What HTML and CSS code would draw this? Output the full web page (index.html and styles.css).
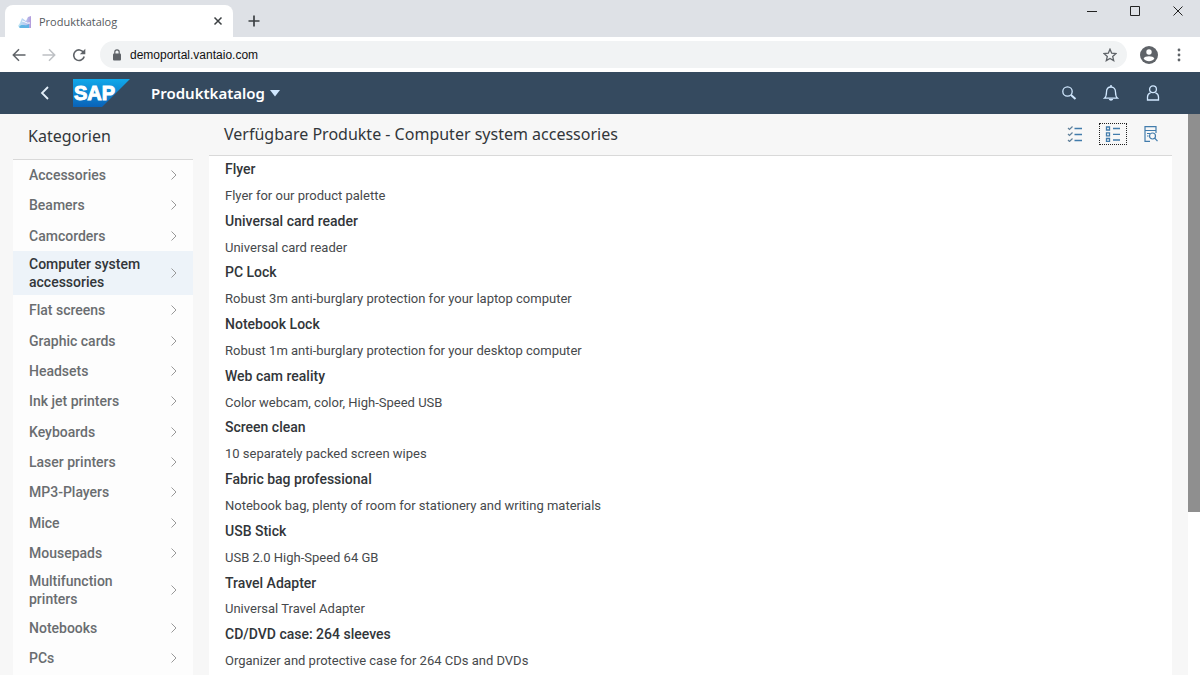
FILE: index.html
```html
<!DOCTYPE html>
<html lang="de">
<head>
<meta charset="utf-8">
<title>Produktkatalog</title>
<link rel="stylesheet" href="styles.css">
</head>
<body>
<svg class="sprite" aria-hidden="true">
  <symbol id="chevron" viewBox="0 0 8 12"><path d="M1.500 1.500 6 6l-4.500 4.500" fill="none" stroke="currentColor"/></symbol>
</svg>
<header class="browser">
  <div class="tabstrip">
    <div class="tab">
      <svg class="favicon" viewBox="0 0 14 14"><defs><linearGradient id="fav" x1="0" x2="1"><stop offset="0" stop-color="#a5dff0"/><stop offset=".6" stop-color="#9fb6ec"/><stop offset="1" stop-color="#9a78cf"/></linearGradient></defs><path d="M13 2v12H2L0 12l2-3 2-5 4 3 2-4z" fill="url(#fav)" opacity=".75"/><path d="M1 13c3-4 6 0 10-3v4H2z" fill="#5fb3e4"/><path d="M4 7c3 0 4 3 8 2" fill="none" stroke="#fff"/></svg>
      <span class="tab-title">Produktkatalog</span>
      <button class="plain" aria-label="Tab schließen"><svg width="10" height="10" viewBox="0 0 10 10"><path d="m1.500 1.500 7 7m0-7-7 7" stroke="#3c4043" stroke-width="1.500"/></svg></button>
    </div>
    <button class="plain new-tab" aria-label="Neuer Tab"><svg width="12" height="12" viewBox="0 0 12 12"><path d="M6 .5v11M.5 6h11" stroke="#3c4043" stroke-width="1.700"/></svg></button>
    <div class="window-controls">
      <button class="plain" aria-label="Minimieren"><svg width="12" height="12" viewBox="0 0 12 12"><path d="M1 6.500h10" stroke="#222"/></svg></button>
      <button class="plain" aria-label="Maximieren"><svg width="12" height="12" viewBox="0 0 12 12"><path d="M1.500 1.500h9v9h-9z" fill="none" stroke="#222"/></svg></button>
      <button class="plain" aria-label="Schließen"><svg width="12" height="12" viewBox="0 0 12 12"><path d="m1.500 1.500 9 9m0-9-9 9" stroke="#222"/></svg></button>
    </div>
  </div>
  <div class="toolbar">
    <button class="plain" aria-label="Zurück"><svg width="14" height="14" viewBox="0 0 14 14" fill="none" stroke="#5f6368" stroke-width="1.500"><path d="M13.500 7h-12M7 1.300 1.300 7 7 12.700"/></svg></button>
    <button class="plain" aria-label="Vorwärts"><svg width="14" height="14" viewBox="0 0 14 14" fill="none" stroke="#bdc0c4" stroke-width="1.500"><path d="M.5 7h12M7 1.300 12.700 7 7 12.700"/></svg></button>
    <button class="plain" aria-label="Neu laden"><svg width="14" height="14" viewBox="0 0 14 14"><path d="M11.600 4.500A5.300 5.300 0 1 0 12.200 8.500" fill="none" stroke="#5f6368" stroke-width="1.600"/><path d="M13.300.8v5.400H7.900z" fill="#5f6368"/></svg></button>
    <div class="address">
      <svg width="10" height="12" viewBox="0 0 10 12"><rect x="1" y="4.500" width="8" height="7" rx="1" fill="#5f6368"/><path d="M2.800 5V3a2.200 2.200 0 0 1 4.400 0v2" fill="none" stroke="#5f6368" stroke-width="1.200"/></svg>
      <input class="url" aria-label="Adresse" value="demoportal.vantaio.com">
      <button class="plain" aria-label="Lesezeichen"><svg width="14" height="14" viewBox="0 0 14 14"><path d="m7 1.200 1.700 4 4.300.4-3.300 2.800 1 4.200L7 10.400l-3.700 2.200 1-4.200L1 5.600l4.300-.4z" fill="none" stroke="#5f6368" stroke-width="1.300"/></svg></button>
    </div>
    <button class="plain" aria-label="Profil"><svg width="18" height="18" viewBox="0 0 18 18"><circle cx="9" cy="9" r="9" fill="#5f6368"/><circle cx="9" cy="6" r="2.700" fill="#fff"/><path d="M3.600 12.500c1.200-3 9.600-3 10.800 0-2.400 3.700-8.400 3.700-10.800 0z" fill="#fff"/></svg></button>
    <button class="plain" aria-label="Menü"><svg width="4" height="14" viewBox="0 0 4 14" fill="#5f6368"><circle cx="2" cy="2" r="1.400"/><circle cx="2" cy="7" r="1.400"/><circle cx="2" cy="12" r="1.400"/></svg></button>
  </div>
</header>
<div class="shell">
  <button class="plain" aria-label="Zurück"><svg width="10" height="14" viewBox="0 0 10 14"><path d="M8 1 2 7l6 6" fill="none" stroke="#e4f0fa" stroke-width="1.800"/></svg></button>
  <svg class="logo" viewBox="0 0 57 28" role="img" aria-label="SAP"><defs><linearGradient id="sap" x2="0" y2="1"><stop offset="0" stop-color="#10a8ea"/><stop offset="1" stop-color="#0a62b8"/></linearGradient></defs><path d="M0 0h57L29 28H0z" fill="url(#sap)"/><text class="logo-text" x="1" y="21">SAP</text></svg>
  <button class="plain app-title">Produktkatalog <svg width="10" height="7" viewBox="0 0 10 7"><path d="M0 0h10L5 6.500z" fill="#d1e8ff"/></svg></button>
  <div class="shell-actions">
    <button class="plain" aria-label="Suche"><svg width="16" height="16" viewBox="0 0 16 16" fill="none" stroke="#d1e8ff"><circle cx="6.500" cy="6.500" r="4.700" stroke-width="1.300"/><path d="m10 10 4.500 4" stroke-width="2"/></svg></button>
    <button class="plain" aria-label="Mitteilungen"><svg width="16" height="16" viewBox="0 0 16 16"><path d="M1.500 13.200h13c-2-1.700-2-3-2-6.200 0-3-1.700-5-4.500-5S3.500 4 3.500 7c0 3.200 0 4.500-2 6.200z" fill="none" stroke="#d1e8ff" stroke-width="1.300"/><path d="M8 0v2" stroke="#d1e8ff" stroke-width="1.500"/><path d="M5.800 14h4.400c-.3 2.300-4.100 2.300-4.400 0z" fill="#d1e8ff"/></svg></button>
    <button class="plain" aria-label="Benutzer"><svg width="16" height="16" viewBox="0 0 16 16" fill="none" stroke="#d1e8ff" stroke-width="1.300"><circle cx="8" cy="4.300" r="3.400"/><path d="M5.500 7.800c-1.800.6-3 2-3 4.200v3h11v-3c0-2.200-1.200-3.600-3-4.200"/></svg></button>
  </div>
</div>
<div class="page">
  <nav class="sidebar" aria-labelledby="cat">
    <h2 class="side-title" id="cat">Kategorien</h2>
    <ul class="categories">
      <li><a href="#">Accessories<svg class="chev"><use href="#chevron"/></svg></a></li>
      <li><a href="#">Beamers<svg class="chev"><use href="#chevron"/></svg></a></li>
      <li><a href="#">Camcorders<svg class="chev"><use href="#chevron"/></svg></a></li>
      <li><a href="#" class="selected" aria-current="page">Computer system accessories<svg class="chev"><use href="#chevron"/></svg></a></li>
      <li><a href="#">Flat screens<svg class="chev"><use href="#chevron"/></svg></a></li>
      <li><a href="#">Graphic cards<svg class="chev"><use href="#chevron"/></svg></a></li>
      <li><a href="#">Headsets<svg class="chev"><use href="#chevron"/></svg></a></li>
      <li><a href="#">Ink jet printers<svg class="chev"><use href="#chevron"/></svg></a></li>
      <li><a href="#">Keyboards<svg class="chev"><use href="#chevron"/></svg></a></li>
      <li><a href="#">Laser printers<svg class="chev"><use href="#chevron"/></svg></a></li>
      <li><a href="#">MP3-Players<svg class="chev"><use href="#chevron"/></svg></a></li>
      <li><a href="#">Mice<svg class="chev"><use href="#chevron"/></svg></a></li>
      <li><a href="#">Mousepads<svg class="chev"><use href="#chevron"/></svg></a></li>
      <li><a href="#">Multifunction printers<svg class="chev"><use href="#chevron"/></svg></a></li>
      <li><a href="#">Notebooks<svg class="chev"><use href="#chevron"/></svg></a></li>
      <li><a href="#">PCs<svg class="chev"><use href="#chevron"/></svg></a></li>
    </ul>
  </nav>
  <main class="content">
    <div class="content-head">
      <h1 class="content-title">Verfügbare Produkte - Computer system accessories</h1>
      <div class="views">
        <button class="plain view" aria-label="Auswahlliste"><svg width="16" height="16" viewBox="0 0 16 16" fill="none" stroke="#427cac"><path d="M7.500 2.500H15M7.500 8.500H15M7.500 14.500H15" stroke-width="1.300"/><path d="m1 2 1.500 1.500L5.500.5M1 8l1.500 1.500 3-3M1 14l1.500 1.500 3-3" stroke="#60809a" stroke-width="1.200"/></svg></button>
        <button class="plain view active" aria-label="Detailliste"><svg width="16" height="16" viewBox="0 0 16 16" fill="none" stroke="#427cac" stroke-width="1.300"><path d="M1.500 1h3v3h-3zM1.500 6.800h3v3h-3zM1.500 12.500h3v3h-3zM8 2.500h7M8 8.300h7M8 14h7"/></svg></button>
        <button class="plain view" aria-label="Vorschau"><svg width="16" height="16" viewBox="0 0 16 16" fill="none" stroke="#427cac" stroke-width="1.200"><path d="M7 15.300H2V.7h11V7M2 4.500h11M4 7.500h3M4 10h1.500"/><circle cx="9.500" cy="10" r="3"/><path d="m11.700 12.200 2.800 3"/></svg></button>
      </div>
    </div>
    <dl class="products">
      <dt>Flyer</dt><dd>Flyer for our product palette</dd>
      <dt>Universal card reader</dt><dd>Universal card reader</dd>
      <dt>PC Lock</dt><dd>Robust 3m anti-burglary protection for your laptop computer</dd>
      <dt>Notebook Lock</dt><dd>Robust 1m anti-burglary protection for your desktop computer</dd>
      <dt>Web cam reality</dt><dd>Color webcam, color, High-Speed USB</dd>
      <dt>Screen clean</dt><dd>10 separately packed screen wipes</dd>
      <dt>Fabric bag professional</dt><dd>Notebook bag, plenty of room for stationery and writing materials</dd>
      <dt>USB Stick</dt><dd>USB 2.0 High-Speed 64 GB</dd>
      <dt>Travel Adapter</dt><dd>Universal Travel Adapter</dd>
      <dt>CD/DVD case: 264 sleeves</dt><dd>Organizer and protective case for 264 CDs and DVDs</dd>
    </dl>
  </main>
  <div class="scrollbar"><div class="thumb"></div></div>
</div>
</body>
</html>
```
FILE: styles.css
```css
* { box-sizing: border-box; }
body { margin: 0; min-height: 100vh; display: flex; flex-direction: column; background: #f7f7f7; font-family: Roboto, "Liberation Sans", sans-serif; font-size: 14px; color: #32363a; }
h1, h2, ul, dl, dd { margin: 0; padding: 0; font-weight: 400; }
svg { flex: none; }
.sprite { display: none; }
.plain { display: flex; align-items: center; justify-content: center; margin: 0; padding: 0; border: 0; background: none; color: inherit; font: inherit; }

.tabstrip { display: flex; height: 37px; padding: 5px 16px 0 5px; background: #dee1e6; }
.tab { display: flex; align-items: center; gap: 7px; width: 228px; padding: 0 10px 0 13px; border-radius: 8px 8px 0 0; background: #fff; }
.favicon { width: 14px; height: 14px; }
.tab-title { flex: 1; font: 11px "Open Sans", sans-serif; color: #55595e; }
.new-tab { width: 41px; }
.window-controls { display: flex; align-items: flex-start; gap: 31px; margin-left: auto; }
.toolbar { display: flex; align-items: center; gap: 16px; height: 35px; padding: 0 19px 0 12px; background: #fff; }
.address { flex: 1; display: flex; align-items: center; gap: 8px; height: 27px; margin: 0 -3px 0 -2px; padding: 0 10px 0 12px; border-radius: 14px; background: #f1f3f4; }
.toolbar > :last-child { margin-left: 3px; }
.url { flex: 1; padding: 0; border: 0; background: none; font: 12px "Liberation Sans", sans-serif; color: #111; }

.shell { display: flex; align-items: center; height: 42px; padding: 0 39px 0 40px; background: #354a5f; color: #fff; }
.logo { width: 57px; height: 28px; margin-left: 23px; }
.logo-text { font: bold 20px "Liberation Sans", sans-serif; fill: #fff; stroke: #fff; }
.app-title { gap: 5px; margin-left: 21px; font: 600 15px "Noto Sans", sans-serif; }
.shell-actions { display: flex; gap: 26px; margin-left: auto; }

.page { flex: 1; display: flex; }
.sidebar { display: flex; flex-direction: column; width: 180px; margin-left: 13px; }
.side-title { padding: 10px 15px 11px; border-bottom: 1px solid #d9d9d9; font: 16px/24px "Noto Sans", sans-serif; }
.categories { flex: 1; display: flex; flex-direction: column; padding-bottom: 2px; background: #fdfdfd; list-style: none; }
.categories li { flex: 1 0 auto; display: flex; }
.categories a { flex: 1; display: flex; align-items: center; justify-content: space-between; gap: 24px; padding: 4px 15px 4px 16px; min-height: 30px; color: #6a6d70; font-weight: 500; line-height: 18px; text-decoration: none; }
.categories .selected { background: #edf3f9; color: #32363a; }
.chev { width: 8px; height: 12px; color: #999; }

.content { flex: 1; display: flex; flex-direction: column; margin: 0 16px; }
.content-head { display: flex; align-items: center; justify-content: space-between; height: 42px; padding: 0 7px 2px 15px; border-bottom: 1px solid #d9d9d9; }
.content-title { font: 16px "Noto Sans", sans-serif; }
.views { display: flex; gap: 10px; }
.view { width: 28px; height: 22px; }
.active { border: 1px dotted #222; }
.products { flex: 1; display: flex; flex-direction: column; padding: 1px 16px; background: #fff; }
.products dt, .products dd { flex: 1 0 auto; line-height: 25px; }
.products dd { color: #46494c; font-size: 13px; }
.products dt { font-weight: 500; }
.scrollbar { width: 12px; background: #fff; }
.thumb { height: 71%; background: #8f8f8f; }
```
